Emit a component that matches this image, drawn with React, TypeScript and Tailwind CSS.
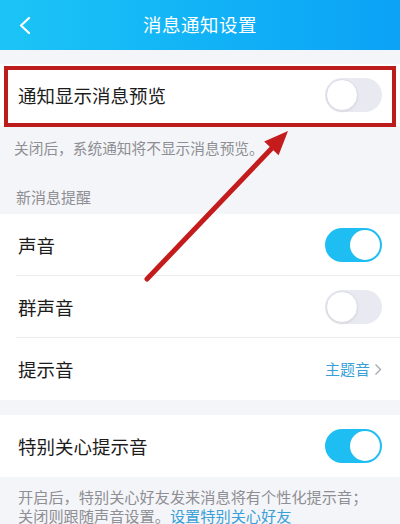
import { ReactNode } from 'react';

const font = { fontFamily: '"Noto Sans CJK SC", "Noto Sans", sans-serif' };

function Toggle({ on }: { on: boolean }) {
  if (on) {
    return (
      <div className="w-[57px] h-[34px] rounded-full bg-[#1ebef2] flex items-center justify-end p-[2px]">
        <div className="w-[30px] h-[30px] rounded-full bg-white" />
      </div>
    );
  }
  return (
    <div className="w-[57px] h-[34px] rounded-full bg-[#e9eaf1] flex items-center justify-start p-[1px]">
      <div className="w-[32px] h-[32px] rounded-full bg-white border border-[#dcdde4] shadow-[0_1px_2px_rgba(0,0,0,0.08)]" />
    </div>
  );
}

function Row({ label, right, divider }: { label: string; right: ReactNode; divider?: boolean }) {
  return (
    <div className="relative flex items-center justify-between h-[62px] pl-[18px] pr-[18px] bg-white">
      <span className="text-[18.5px] text-[#1c1c1c] leading-none">{label}</span>
      {right}
      {divider && <div className="absolute left-[16px] right-0 bottom-0 h-px bg-[#ececf0]" />}
    </div>
  );
}

export default function App() {
  return (
    <div className="relative w-[400px] h-[524px] overflow-hidden bg-[#f4f5f9]" style={font}>
      <div className="h-[50px] relative flex items-center justify-center bg-gradient-to-r from-[#1cc4f6] to-[#0ba2f6]">
        <svg className="absolute left-[18px] top-[16px]" width="14" height="19" viewBox="0 0 14 19">
          <path d="M11 2 L3 9.5 L11 17" fill="none" stroke="white" strokeWidth="2.2" strokeLinecap="round" strokeLinejoin="round" />
        </svg>
        <span className="text-white text-[18.5px] tracking-[0.5px]">消息通知设置</span>
      </div>

      <div className="h-[14px]" />
      <div className="relative">
        <Row label="通知显示消息预览" right={<Toggle on={false} />} />
        <div className="absolute left-[4px] right-[4px] top-[2px] bottom-[-1px] border-[4px] border-[#bd1c1c] pointer-events-none" />
      </div>

      <div className="h-[88px] px-[14px] flex flex-col">
        <div className="pt-[12px] text-[14.7px] text-[#8e8e93] leading-[20px]">关闭后，系统通知将不显示消息预览。</div>
        <div className="mt-[29px] pl-[2px] text-[15px] text-[#8e8e93] leading-[20px]">新消息提醒</div>
      </div>

      <div className="bg-white">
        <Row label="声音" right={<Toggle on />} divider />
        <Row label="群声音" right={<Toggle on={false} />} divider />
        <Row
          label="提示音"
          right={
            <span className="flex items-center gap-[4px] text-[15px] text-[#3a9fd6]">
              主题音
              <svg width="8" height="13" viewBox="0 0 8 13">
                <path d="M1.5 1.5 L6.5 6.5 L1.5 11.5" fill="none" stroke="#a8a8b0" strokeWidth="1.4" />
              </svg>
            </span>
          }
        />
      </div>

      <div className="h-[15px]" />
      <Row label="特别关心提示音" right={<Toggle on />} />

      <div className="px-[18px] pt-[10px] text-[15.2px] text-[#8e8e93] leading-[19px]">
        <p>开启后，特别关心好友发来消息将有个性化提示音；</p>
        <p>
          关闭则跟随声音设置。<span className="text-[#3a9fd6]">设置特别关心好友</span>
        </p>
      </div>

      <svg className="absolute inset-0 pointer-events-none" width="400" height="524" viewBox="0 0 400 524">
        <line x1="147" y1="279" x2="274" y2="146" stroke="#c41c1c" strokeWidth="5" strokeLinecap="round" />
        <polygon points="288,131 278.6,155.2 264.2,141.4" fill="#c41c1c" />
      </svg>
    </div>
  );
}
